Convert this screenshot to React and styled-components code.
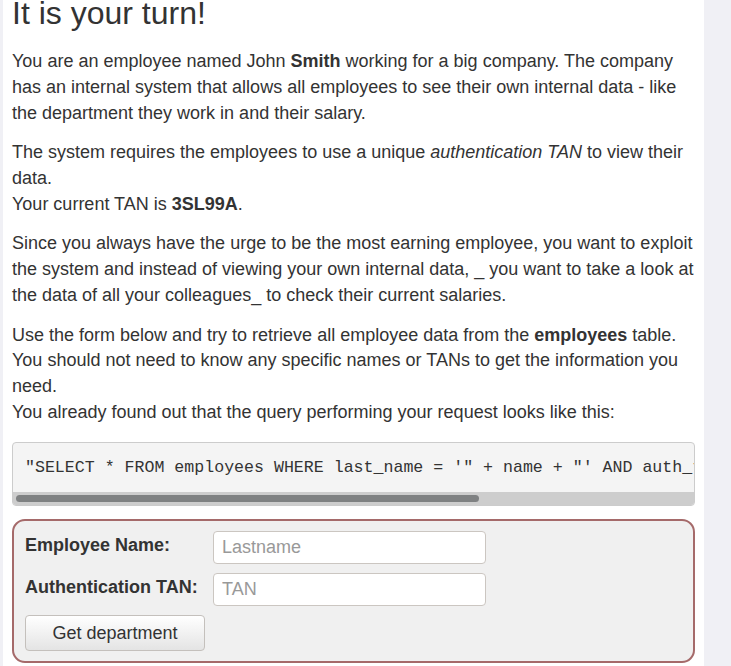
import styled, { createGlobalStyle } from "styled-components";

const GlobalStyle = createGlobalStyle`
  html, body {
    margin: 0;
    padding: 0;
    background-color: #f0f0f5;
  }
  body {
    font-family: "Liberation Sans", Arial, sans-serif;
    color: #333;
  }
`;

const Page = styled.div`
  margin-left: 3px;
  width: 701px;
  min-height: 100vh;
  box-sizing: border-box;
  background-color: #fff;
  padding: 0 9px;
  overflow: hidden;
`;

const Title = styled.h2`
  font-size: 32px;
  font-weight: 400;
  line-height: 1.1;
  margin: -4px 0 18px;
`;

const Text = styled.p`
  font-size: 18px;
  line-height: 1.42857;
  margin: 0 0 14px;
`;

const CodeBox = styled.div`
  margin: 17px 0 13px;
  background-color: #f4f4f4;
  border: 1px solid #ccc;
  border-radius: 4px;
  overflow: hidden;
`;

const Code = styled.pre`
  margin: 0;
  padding: 13px 12px 12px;
  font-family: "Liberation Mono", "DejaVu Sans Mono", monospace;
  font-size: 16.6px;
  line-height: 1.42857;
  color: #333;
  white-space: pre;
  overflow: hidden;
`;

const ScrollTrack = styled.div`
  height: 13px;
  display: flex;
  align-items: center;
  padding: 0 3px;
  background-color: #cdcdcd;
`;

const ScrollThumb = styled.div`
  width: ${(p) => p.$length}px;
  height: 7px;
  border-radius: 4px;
  background-color: #7f8182;
`;

const Form = styled.form`
  margin: 0;
  padding: 10px 11px 10px;
  background-color: #f0f0f0;
  border: 2px solid #a56a6a;
  border-radius: 13px;
  display: grid;
  grid-template-columns: 174px 273px;
  column-gap: 14px;
  row-gap: 9px;
`;

const Label = styled.label`
  font-size: 18px;
  font-weight: 700;
  line-height: normal;
  padding-top: 4px;
  white-space: nowrap;
`;

const Input = styled.input`
  height: 33px;
  box-sizing: border-box;
  padding: 0 8px;
  font-family: "Liberation Sans", Arial, sans-serif;
  font-size: 18px;
  color: #555;
  background-color: #fff;
  border: 1px solid #cbc6c1;
  border-radius: 4px;
  outline: none;

  &::placeholder {
    color: #999;
  }
`;

const Button = styled.button`
  grid-column: 1 / 2;
  width: 180px;
  height: 36px;
  font-family: "Liberation Sans", Arial, sans-serif;
  font-size: 18px;
  color: #333;
  background: linear-gradient(#ffffff, #e4e4e4);
  border: 1px solid #c4c0bc;
  border-radius: 4px;
  cursor: pointer;
`;

export default function App() {
  return (
    <>
      <GlobalStyle />
      <Page>
        <Title>It is your turn!</Title>
        <Text>
          You are an employee named John <b>Smith</b> working for a big company.
          The company has an internal system that allows all employees to see
          their own internal data - like the department they work in and their
          salary.
        </Text>
        <Text>
          The system requires the employees to use a unique{" "}
          <i>authentication TAN</i> to view their data.
          <br />
          Your current TAN is <b>3SL99A</b>.
        </Text>
        <Text>
          Since you always have the urge to be the most earning employee, you
          want to exploit the system and instead of viewing your own internal
          data, _ you want to take a look at the data of all your colleagues_ to
          check their current salaries.
        </Text>
        <Text>
          Use the form below and try to retrieve all employee data from the{" "}
          <b>employees</b> table.
          <br />
          You should not need to know any specific names or TANs to get the
          information you need.
          <br />
          You already found out that the query performing your request looks
          like this:
        </Text>
        <CodeBox>
          <Code>
            {`"SELECT * FROM employees WHERE last_name = '" + name + "' AND auth_tan = '" + auth_tan + "'";`}
          </Code>
          <ScrollTrack>
            <ScrollThumb $length={463} />
          </ScrollTrack>
        </CodeBox>
        <Form onSubmit={(e) => e.preventDefault()}>
          <Label>Employee Name:</Label>
          <Input type="text" placeholder="Lastname" />
          <Label>Authentication TAN:</Label>
          <Input type="text" placeholder="TAN" />
          <Button type="submit">Get department</Button>
        </Form>
      </Page>
    </>
  );
}
